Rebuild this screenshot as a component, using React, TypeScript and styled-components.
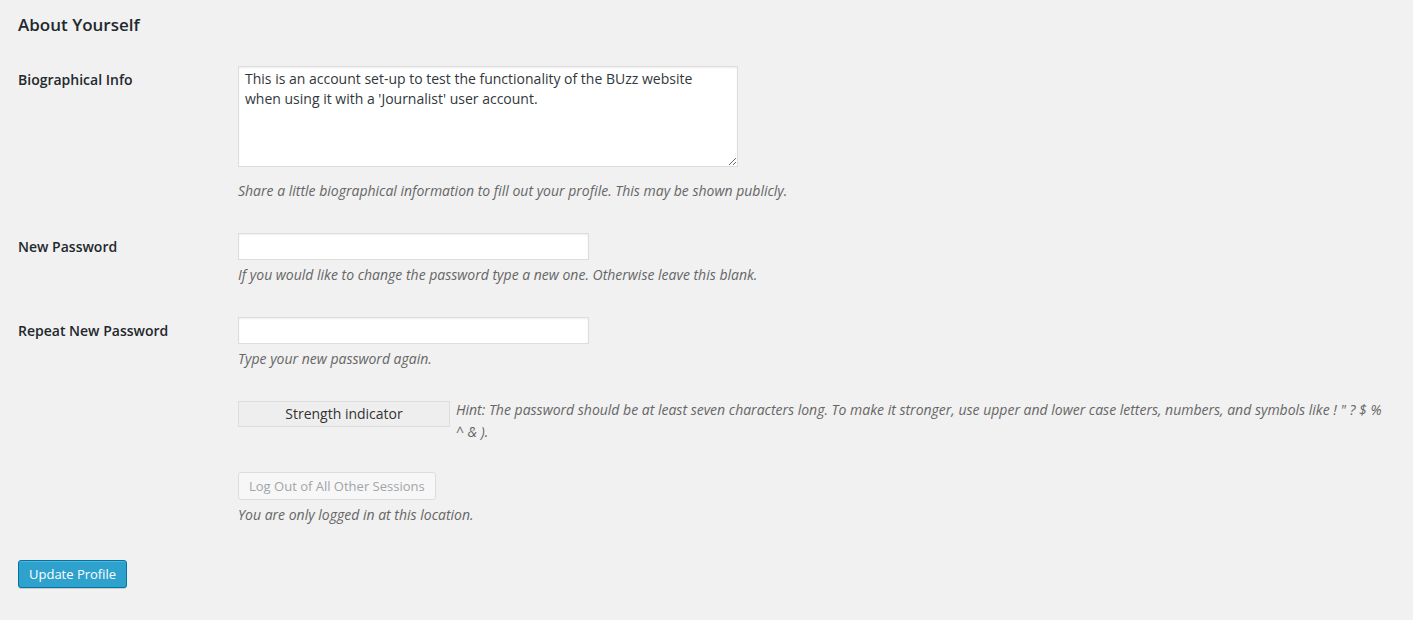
import React from "react";
import styled, { createGlobalStyle } from "styled-components";

const GlobalStyle = createGlobalStyle`
  html, body {
    margin: 0;
    padding: 0;
    background: #f1f1f1;
  }
  body {
    font-family: "Open Sans", "Liberation Sans", sans-serif;
    color: #444;
    font-size: 13px;
  }
  * { box-sizing: border-box; }
`;

const Page = styled.div`
  padding: 12px 25px 32px 18px;
  display: flex;
  flex-direction: column;
`;

const Heading = styled.h3`
  margin: 0;
  font-size: 17px;
  line-height: 25px;
  font-weight: 600;
  color: #23282d;
`;

const Row = styled.div<{ $top: number }>`
  display: grid;
  grid-template-columns: 220px 1fr;
  margin-top: ${(p) => p.$top}px;
`;

const Label = styled.label`
  padding-top: 4px;
  font-size: 14px;
  line-height: 20px;
  font-weight: 600;
  color: #23282d;
`;

const Field = styled.div`
  display: flex;
  flex-direction: column;
  align-items: flex-start;
  min-width: 0;
`;

const TextArea = styled.textarea`
  display: block;
  width: 500px;
  height: 101px;
  margin: 0;
  padding: 2px 6px;
  border: 1px solid #ddd;
  background: #fff;
  box-shadow: inset 0 1px 2px rgba(0, 0, 0, 0.07);
  font-family: "Open Sans", "Liberation Sans", sans-serif;
  font-size: 14px;
  line-height: 19.5px;
  color: #32373c;
  outline: none;
`;

const TextInput = styled.input`
  display: block;
  width: 351px;
  height: 27px;
  margin: 0;
  padding: 3px 5px;
  border: 1px solid #ddd;
  background: #fff;
  box-shadow: inset 0 1px 2px rgba(0, 0, 0, 0.07);
  font-family: "Open Sans", "Liberation Sans", sans-serif;
  font-size: 14px;
  color: #32373c;
  outline: none;
`;

const Description = styled.p<{ $gap: number }>`
  margin: ${(p) => p.$gap}px 0 0;
  font-size: 14px;
  line-height: 20px;
  font-style: italic;
  color: #666;
`;

const StrengthLine = styled.div`
  display: flex;
  align-items: flex-start;
`;

const StrengthBox = styled.div`
  flex: 0 0 212px;
  height: 26px;
  margin: 2px 5px 0 0;
  border: 1px solid #ddd;
  background: #eee;
  font-size: 14px;
  line-height: 24px;
  text-align: center;
  color: #333;
`;

const Hint = styled.p`
  margin: 0;
  padding-left: 1px;
  font-size: 14px;
  line-height: 22px;
  font-style: italic;
  color: #666;
`;

const SecondaryButton = styled.button`
  height: 28px;
  margin: 0;
  padding: 0 10px 1px;
  border: 1px solid #ddd;
  border-radius: 3px;
  background: #f7f7f7;
  box-shadow: none;
  font-family: "Open Sans", "Liberation Sans", sans-serif;
  font-size: 13px;
  line-height: 26px;
  color: #a0a5aa;
  cursor: default;
`;

const PrimaryButton = styled.button`
  align-self: flex-start;
  height: 28px;
  margin: 35px 0 0;
  padding: 0 10px 1px;
  border: 1px solid #0074a2;
  border-radius: 3px;
  background: #2ea2cc;
  box-shadow: inset 0 1px 0 rgba(120, 200, 230, 0.5), 0 1px 0 rgba(0, 0, 0, 0.15);
  font-family: "Open Sans", "Liberation Sans", sans-serif;
  font-size: 13px;
  line-height: 26px;
  color: #fff;
  cursor: pointer;
`;

export default function App() {
  return (
    <>
      <GlobalStyle />
      <Page>
        <Heading>About Yourself</Heading>

        <Row $top={29}>
          <Label htmlFor="description">Biographical Info</Label>
          <Field>
            <TextArea
              id="description"
              defaultValue={
                "This is an account set-up to test the functionality of the BUzz website when using it with a 'Journalist' user account."
              }
            />
            <Description $gap={14}>
              Share a little biographical information to fill out your profile. This may be shown publicly.
            </Description>
          </Field>
        </Row>

        <Row $top={32}>
          <Label htmlFor="pass1">New Password</Label>
          <Field>
            <TextInput id="pass1" type="password" />
            <Description $gap={5}>
              If you would like to change the password type a new one. Otherwise leave this blank.
            </Description>
          </Field>
        </Row>

        <Row $top={32}>
          <Label htmlFor="pass2">Repeat New Password</Label>
          <Field>
            <TextInput id="pass2" type="password" />
            <Description $gap={5}>Type your new password again.</Description>
          </Field>
        </Row>

        <Row $top={30}>
          <span />
          <StrengthLine>
            <StrengthBox>Strength indicator</StrengthBox>
            <Hint>
              Hint: The password should be at least seven characters long. To make it stronger, use upper and lower
              case letters, numbers, and symbols like ! " ? $ % ^ &amp; ).
            </Hint>
          </StrengthLine>
        </Row>

        <Row $top={29}>
          <span />
          <Field>
            <SecondaryButton type="button" disabled>
              Log Out of All Other Sessions
            </SecondaryButton>
            <Description $gap={5}>You are only logged in at this location.</Description>
          </Field>
        </Row>

        <PrimaryButton type="button">Update Profile</PrimaryButton>
      </Page>
    </>
  );
}
